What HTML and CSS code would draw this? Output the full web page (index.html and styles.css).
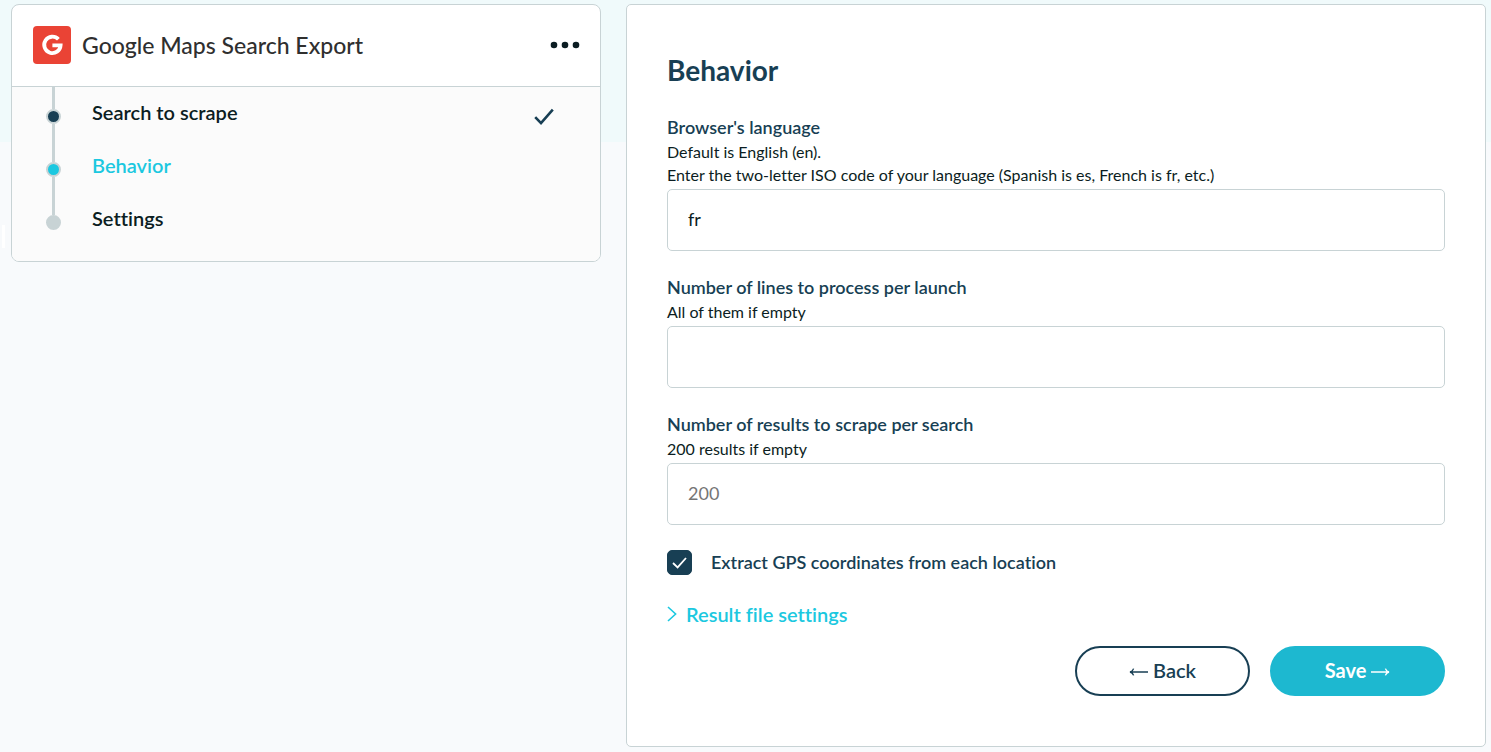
FILE: index.html
```
<!DOCTYPE html>
<html lang="en">
  <head>
    <meta charset="UTF-8" />
    <meta name="viewport" content="width=device-width, initial-scale=1.0" />
    <title>Google Maps Search Export</title>
    <link rel="stylesheet" href="styles.css">
  </head>
  <body>
    <div class="side-tab"></div>
    <main class="layout">
      <aside class="card steps-card">
        <header class="steps-header">
          <svg class="logo" viewBox="0 0 38 38" aria-hidden="true">
            <rect width="38" height="38" rx="4" fill="#ea4335" />
            <path d="M25.4 13.3A8.2 8.2 0 1 0 27.6 19.4H19.4" fill="none" stroke="#fff" stroke-width="3.8" />
          </svg>
          <h1 class="steps-title">Google Maps Search Export</h1>
          <button type="button" class="more-button" aria-label="More options">
            <svg width="30" height="8" viewBox="0 0 30 8" fill="#0b1d22">
              <circle cx="4" cy="4" r="3.3" />
              <circle cx="15" cy="4" r="3.3" />
              <circle cx="26" cy="4" r="3.3" />
            </svg>
          </button>
        </header>
        <ol class="steps">
          <li class="step">
            <span class="marker"><span class="dot dot-done"></span></span>
            <a href="#search" class="step-link">Search to scrape</a>
            <svg class="step-check" width="20" height="18" viewBox="0 0 20 18" fill="none" stroke="#183f54" stroke-width="2.6">
              <path d="M1.2 9.2L7 15.2L18.8 1.6" />
            </svg>
          </li>
          <li class="step">
            <span class="marker"><span class="dot dot-active"></span></span>
            <a href="#behavior" class="step-link active">Behavior</a>
          </li>
          <li class="step">
            <span class="marker"><span class="dot"></span></span>
            <a href="#settings" class="step-link">Settings</a>
          </li>
        </ol>
      </aside>

      <form class="card form-card">
        <h2 class="form-title">Behavior</h2>

        <div class="field">
          <label for="language">Browser's language</label>
          <p class="hint">Default is English (en).<br>Enter the two-letter ISO code of your language (Spanish is es, French is fr, etc.)</p>
          <input type="text" id="language" class="text-input" value="fr" />
        </div>

        <div class="field">
          <label for="lines">Number of lines to process per launch</label>
          <p class="hint">All of them if empty</p>
          <input type="text" id="lines" class="text-input" />
        </div>

        <div class="field">
          <label for="results">Number of results to scrape per search</label>
          <p class="hint">200 results if empty</p>
          <input type="text" id="results" class="text-input" placeholder="200" />
        </div>

        <div class="check-row">
          <input type="checkbox" id="gps" class="checkbox" checked />
          <label for="gps">Extract GPS coordinates from each location</label>
        </div>

        <button type="button" class="toggle">
          <svg width="10" height="16" viewBox="0 0 10 16" fill="none" stroke="#1bc8e0" stroke-width="1.6">
            <path d="M1 1L8.6 8L1 15" />
          </svg>
          Result file settings
        </button>

        <div class="actions">
          <button type="button" class="button button-back">
            <svg class="arrow" width="19" height="8" viewBox="0 0 19 8" fill="none" stroke="currentColor" stroke-width="1.4">
              <path d="M19 4H1M4.6 0.6C4 2.4 2.8 3.6 1 4C2.8 4.4 4 5.6 4.6 7.4" />
            </svg>
            Back
          </button>
          <button type="submit" class="button button-save">
            Save
            <svg class="arrow" width="19" height="8" viewBox="0 0 19 8" fill="none" stroke="currentColor" stroke-width="1.4">
              <path d="M0 4H18M14.4 0.6C15 2.4 16.2 3.6 18 4C16.2 4.4 15 5.6 14.4 7.4" />
            </svg>
          </button>
        </div>
      </form>
    </main>
  </body>
</html>
```
FILE: styles.css
```
* {
  box-sizing: border-box;
}
body {
  margin: 0;
  min-height: 100vh;
  font-family: Lato, sans-serif;
  font-variant-ligatures: none;
  color: #0b1d22;
  background: linear-gradient(#f0fafb 142px, #f8fafc 142px);
}
.side-tab {
  position: absolute;
  left: 2px;
  top: 225px;
  width: 3px;
  height: 23px;
  background-color: #fff;
}
.layout {
  display: grid;
  grid-template-columns: minmax(0, 59fr) minmax(0, 86fr);
  align-items: start;
  gap: 25px;
  padding: 4px 5px 5px 11px;
}
.card {
  border: 1px solid #c8d3d5;
  background-color: #fff;
}
.steps-card {
  border-radius: 8px;
  overflow: hidden;
}
.steps-header {
  display: flex;
  align-items: center;
  height: 82px;
  padding: 0 20px 1px 21px;
  border-bottom: 1px solid #c8d3d5;
}
.logo {
  width: 38px;
  height: 38px;
}
.steps-title {
  flex: 1;
  margin: 0 0 0 11px;
  font-size: 23px;
  font-weight: 500;
  color: #2f2f2f;
}
.more-button {
  display: flex;
  padding: 0;
  border: none;
  background: none;
  cursor: pointer;
}
.steps {
  margin: 0;
  padding: 0 46px 15px 34px;
  list-style: none;
  background-color: #fbfbfb;
}
.step {
  display: flex;
  height: 53px;
}
.marker {
  display: flex;
  flex-direction: column;
  align-items: center;
  width: 15px;
  margin-right: 31px;
}
.marker::before,
.marker::after {
  content: "";
  width: 3px;
  height: 22px;
  background-color: #c8d3d5;
}
.marker::after {
  flex: 1;
}
.step:last-child .marker::after {
  display: none;
}
.dot {
  width: 15px;
  height: 15px;
  border: 2px solid #c8d3d5;
  border-radius: 50%;
  background-color: #c8d3d5;
}
.dot-done {
  background-color: #183f54;
}
.dot-active {
  background-color: #1bc8e0;
}
.step-link {
  flex: 1;
  font-size: 20px;
  font-weight: 600;
  line-height: 51px;
  color: #0b1d22;
  text-decoration: none;
}
.step-link.active {
  color: #1bc8e0;
}
.step-check {
  margin-top: 21px;
}
.form-card {
  padding: 47px 40px 50px;
  border-radius: 5px;
}
.form-title {
  margin: 0 0 27px;
  font-size: 28px;
  line-height: 36px;
  color: #183f54;
}
.field {
  margin-bottom: 24px;
}
.field label,
.check-row label {
  display: block;
  font-size: 18px;
  font-weight: 600;
  line-height: 25px;
  color: #183f54;
}
.hint {
  margin: 0;
  font-size: 16px;
  line-height: 23px;
  padding-bottom: 3px;
}
.text-input {
  display: block;
  width: 100%;
  height: 62px;
  padding: 0 20px 2px;
  border: 1px solid #c8d3d5;
  border-radius: 5px;
  background-color: #fff;
  font-family: inherit;
  font-size: 18px;
  color: #0b1d22;
}
.text-input::placeholder {
  color: #757575;
}
.check-row {
  display: flex;
  align-items: center;
  gap: 19px;
  padding-top: 1px;
}
.checkbox {
  appearance: none;
  width: 25px;
  height: 25px;
  margin: 0;
  border: 1px solid #183f54;
  border-radius: 5px;
}
.checkbox:checked {
  background: #183f54 url("data:image/svg+xml,%3Csvg xmlns='http://www.w3.org/2000/svg' viewBox='0 0 15 12' fill='none' stroke='white' stroke-width='1.8'%3E%3Cpath d='M1 6L5.6 10.4L14 1'/%3E%3C/svg%3E") center / 15px 12px no-repeat;
}
.toggle {
  display: flex;
  align-items: center;
  gap: 9px;
  margin-top: 25px;
  padding: 0;
  border: none;
  background: none;
  font-family: inherit;
  font-variant-ligatures: none;
  font-size: 20px;
  font-weight: 600;
  line-height: 28px;
  color: #1bc8e0;
  cursor: pointer;
}
.actions {
  display: flex;
  justify-content: flex-end;
  gap: 20px;
  margin-top: 18px;
}
.button {
  display: flex;
  align-items: center;
  justify-content: center;
  gap: 5px;
  width: 175px;
  height: 50px;
  padding: 0 0 2px;
  border: 2px solid #183f54;
  border-radius: 25px;
  background-color: #fff;
  font-family: inherit;
  font-size: 20px;
  font-weight: 600;
  color: #183f54;
  cursor: pointer;
}
.button-save {
  border-color: #1db8d0;
  background-color: #1db8d0;
  font-weight: 700;
  color: #fff;
}
.arrow {
  margin-top: 4px;
}
```
